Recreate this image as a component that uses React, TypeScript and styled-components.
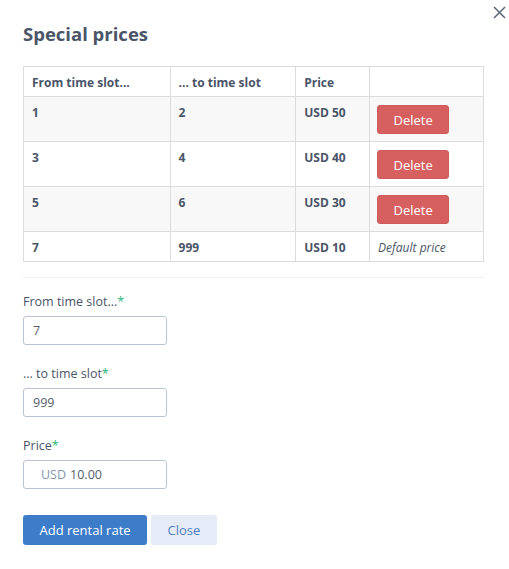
import styled, {createGlobalStyle} from 'styled-components';

const GlobalStyle = createGlobalStyle`
   body {
      margin: 0;
      background: #fff;
      font-family: 'Open Sans', 'Noto Sans', sans-serif;
      color: #4a5568;
   }
`;

const Modal = styled.div`
   position: relative;
   width: 509px;
   box-sizing: border-box;
   padding: 21px 25px 24px 23px;
`;

const CloseX = styled.button`
   position: absolute;
   top: 4px;
   right: 2px;
   width: 16px;
   height: 16px;
   padding: 0;
   border: 0;
   background: none;
   display: flex;
   align-items: center;
   justify-content: center;
   cursor: pointer;
`;

const Title = styled.h2`
   margin: 0 0 19px;
   font-size: 18.5px;
   line-height: 26px;
   font-weight: 700;
   color: #4a5568;
`;

const Table = styled.table`
   width: 461px;
   border-collapse: collapse;
   font-size: 12px;
   font-weight: 700;
   color: #4a5568;
   td,
   th {
      border: 1px solid #dcdcdc;
      padding: 9px 8px 6px;
      line-height: 14px;
      text-align: left;
      vertical-align: top;
   }
`;

const Row = styled.tr<{$shaded?: boolean}>`
   background: ${p => (p.$shaded ? '#f8f8f8' : '#fff')};
`;

const DeleteButton = styled.button`
   display: block;
   width: 72px;
   height: 29px;
   border: 1px solid #cf5a5a;
   border-radius: 3px;
   background: #d65f5f;
   color: #fff;
   font-family: 'Open Sans', sans-serif;
   font-size: 13px;
   padding: 0;
   margin: -1px 0 1px -1px;
   cursor: pointer;
`;

const DefaultPrice = styled.span`
   font-style: italic;
   font-weight: 400;
`;

const Divider = styled.hr`
   width: 461px;
   margin: 15px 0 14px;
   border: 0;
   border-top: 1px solid #eef1f6;
`;

const Field = styled.div`
   display: flex;
   flex-direction: column;
   gap: 4px;
   margin-bottom: 19px;
`;

const Label = styled.label`
   font-size: 12.5px;
   line-height: 20px;
   color: #4a5568;
   span {
      color: #2fb67c;
   }
`;

const Input = styled.div<{$indent?: number}>`
   width: 144px;
   height: 29px;
   box-sizing: border-box;
   border: 1px solid #b9c4d6;
   border-radius: 3px;
   padding-left: ${p => p.$indent ?? 9}px;
   display: flex;
   align-items: center;
   font-size: 12.5px;
   color: #555e6b;
`;

const Prefix = styled.span`
   color: #8494ab;
   margin-right: 4px;
`;

const Actions = styled.div`
   display: flex;
   gap: 4px;
   margin-top: 26px;
`;

const Button = styled.button<{$primary?: boolean}>`
   height: 30px;
   padding: 0 16.5px;
   border: 0;
   border-radius: 3px;
   font-family: 'Open Sans', sans-serif;
   font-size: 13px;
   background: ${p => (p.$primary ? '#3d7cc9' : '#e5ecf8')};
   color: ${p => (p.$primary ? '#fff' : '#4f7fc2')};
   cursor: pointer;
`;

const rates = [
   {from: '1', to: '2', price: 'USD 50'},
   {from: '3', to: '4', price: 'USD 40'},
   {from: '5', to: '6', price: 'USD 30'},
];

const App = () => {
   return (
      <>
         <GlobalStyle />
         <Modal>
            <CloseX type='button' aria-label='Close'>
               <svg width='13' height='13' viewBox='0 0 13 13'>
                  <path
                     d='M1 1 L12 12 M12 1 L1 12'
                     stroke='#5b6678'
                     strokeWidth='1.5'
                     fill='none'
                  />
               </svg>
            </CloseX>
            <Title>Special prices</Title>
            <Table>
               <colgroup>
                  <col style={{width: 147}} />
                  <col style={{width: 126}} />
                  <col style={{width: 74}} />
                  <col style={{width: 114}} />
               </colgroup>
               <thead>
                  <Row>
                     <th>From time slot...</th>
                     <th>... to time slot</th>
                     <th>Price</th>
                     <th />
                  </Row>
               </thead>
               <tbody>
                  {rates.map((r, i) => (
                     <Row key={r.from} $shaded={i % 2 === 0}>
                        <td>{r.from}</td>
                        <td>{r.to}</td>
                        <td>{r.price}</td>
                        <td>
                           <DeleteButton type='button'>Delete</DeleteButton>
                        </td>
                     </Row>
                  ))}
                  <Row>
                     <td>7</td>
                     <td>999</td>
                     <td>USD 10</td>
                     <td>
                        <DefaultPrice>Default price</DefaultPrice>
                     </td>
                  </Row>
               </tbody>
            </Table>
            <Divider />
            <Field>
               <Label>
                  From time slot...<span>*</span>
               </Label>
               <Input>7</Input>
            </Field>
            <Field>
               <Label>
                  ... to time slot<span>*</span>
               </Label>
               <Input>999</Input>
            </Field>
            <Field>
               <Label>
                  Price<span>*</span>
               </Label>
               <Input $indent={17}>
                  <Prefix>USD</Prefix>10.00
               </Input>
            </Field>
            <Actions>
               <Button type='button' $primary>
                  Add rental rate
               </Button>
               <Button type='button'>Close</Button>
            </Actions>
         </Modal>
      </>
   );
};

export default App;
